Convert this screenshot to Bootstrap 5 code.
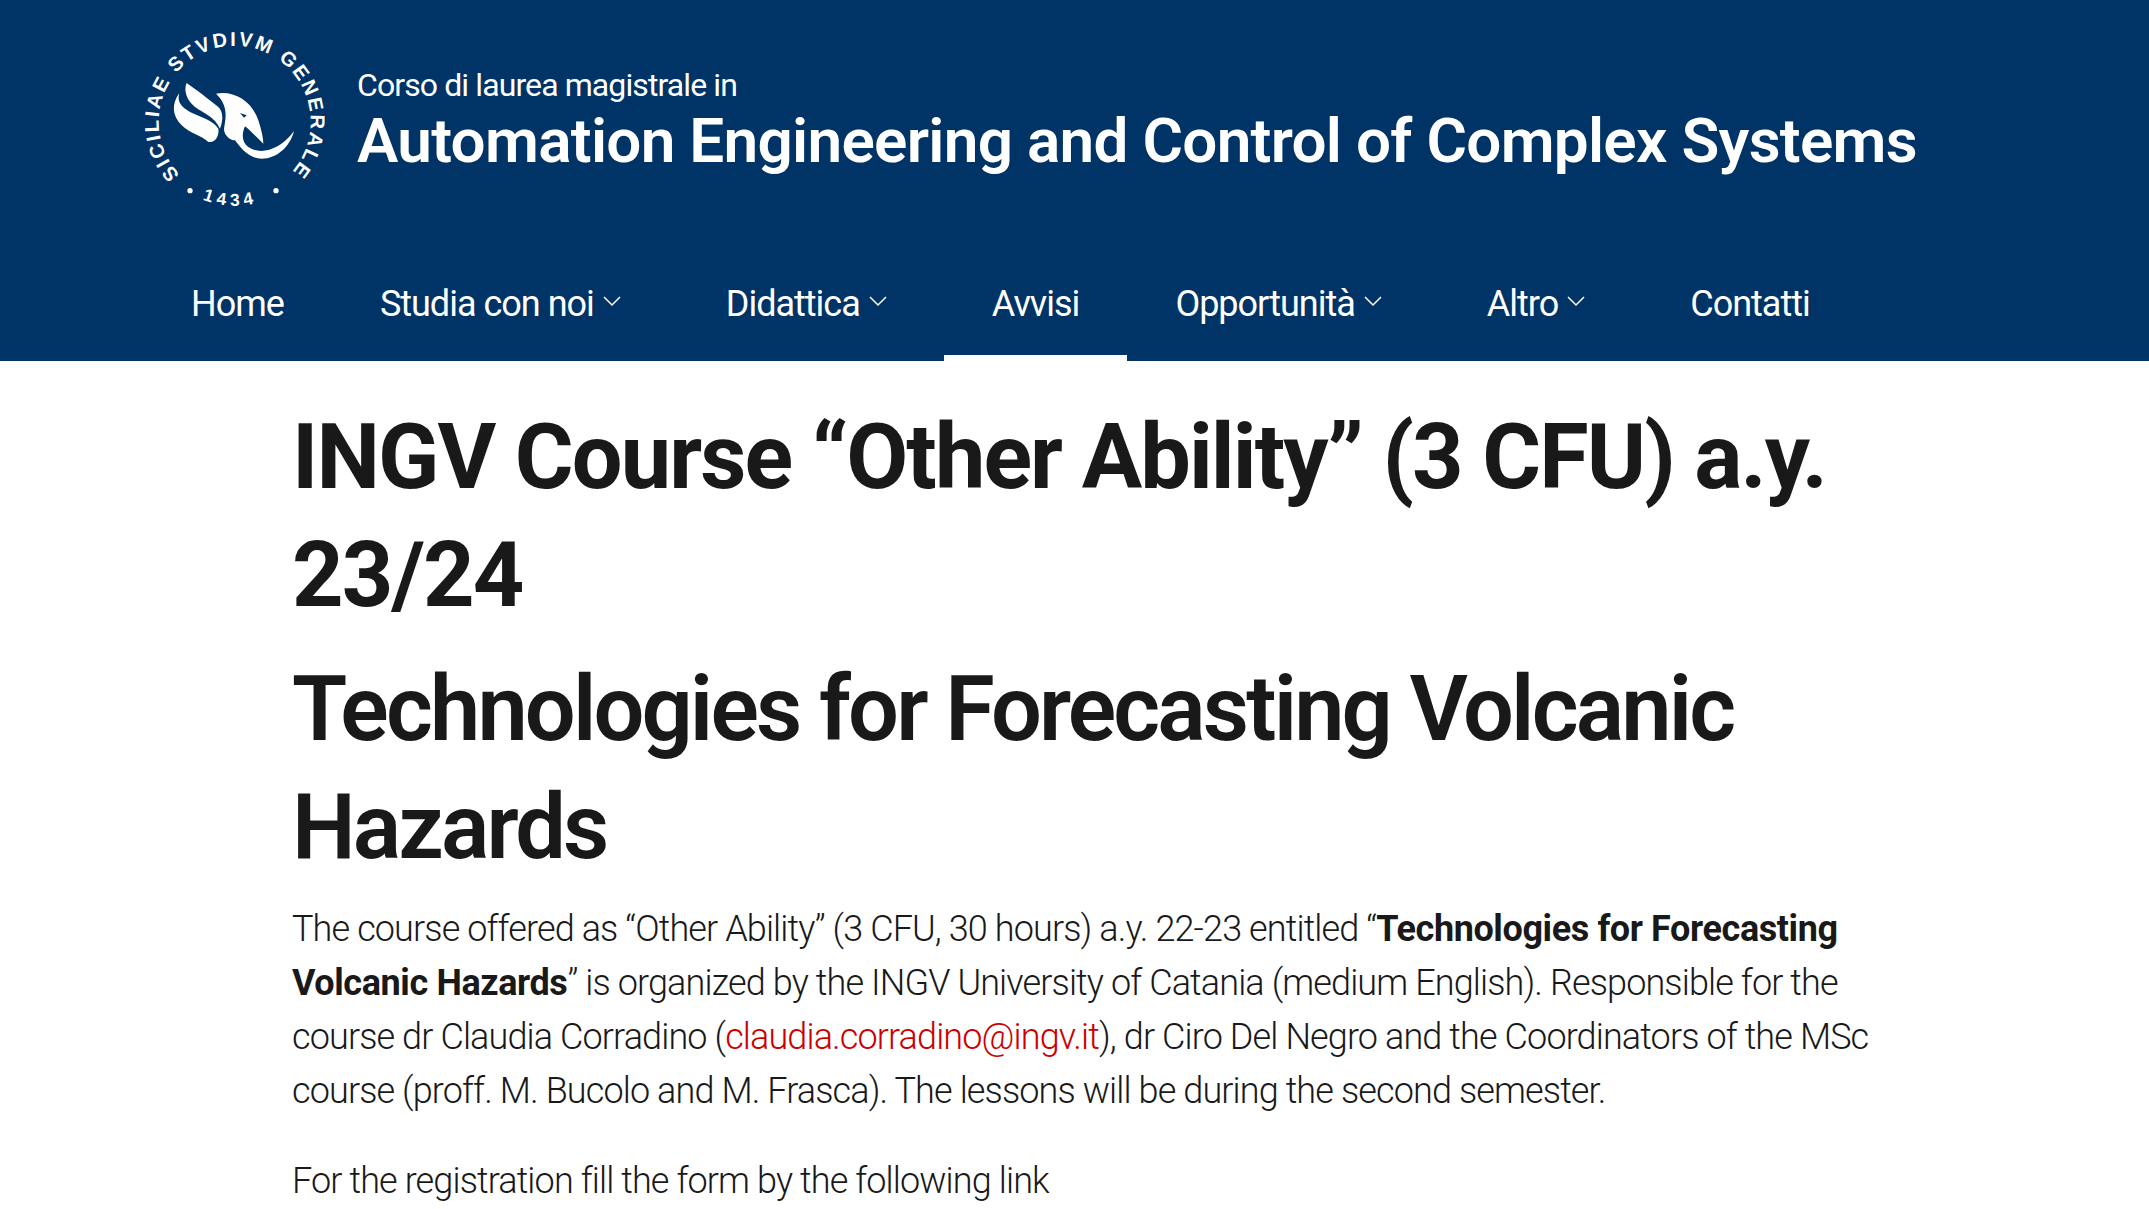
<!DOCTYPE html>
<html lang="en">

<head>
    <title>INGV Course</title>
    <link href="https://cdn.jsdelivr.net/npm/bootstrap@5.3.1/dist/css/bootstrap.min.css" rel="stylesheet">
    <style>
        body { font-family: Roboto, "Liberation Sans", sans-serif; color: #19191a; font-weight: 300; overflow: hidden; }
        .site-head { background: #003366; height: 361px; padding-left: 140px; color: #fff; }
        .brand-row { height: 248px; }
        .brand-logo { width: 187px; height: 187px; margin-top: 27px; margin-right: 30px; flex: none; overflow: visible; }
        .brand-sub { font-size: 32px; line-height: 40px; letter-spacing: -0.9px; font-weight: 400; }
        .brand-title { font-size: 62px; line-height: 72px; font-weight: 600; letter-spacing: -0.7px; }
        .brand-text { margin-top: 65px; }
        .main-nav { padding-left: 3px; height: 113px; }
        .main-nav .nav-link { color: #fff; font-size: 36px; line-height: 54px; font-weight: 400; letter-spacing: -1px; padding: 29px 48px 30px; height: 113px; }
        .main-nav .nav-link.active { border-bottom: 6px solid #fff; }
        .nav-chev { width: 18px; height: 12px; margin-left: 9px; margin-right: 9px; vertical-align: 9px; }
        .article { padding: 38px 0 0 292px; width: 1880px; }
        .article h1, .article h2 { font-size: 90px; line-height: 118px; margin: 0; }
        .article h1 { font-weight: 700; letter-spacing: -1.9px; }
        .article h2 { font-weight: 600; letter-spacing: -2.85px; margin-top: 16px; margin-bottom: 15px; }
        .article p { font-size: 36px; line-height: 54px; letter-spacing: -0.88px; margin-bottom: 36px; }
        .article strong { font-weight: 700; letter-spacing: -0.4px; }
        .article a { color: #cc0000; text-decoration: none; }
    </style>
</head>

<body>
    <header class="site-head">
        <div class="brand-row d-flex">
            <svg class="brand-logo" viewBox="60 80 561 561">
                <defs>
                    <path id="ringTop" d="M180 523 A228 228 0 1 1 508 523" />
                    <path id="ringLow" d="M230 590 A258 258 0 0 0 458 590" />
                </defs>
                <text fill="#fff" font-family="Liberation Sans" font-weight="700" font-size="60" letter-spacing="6.9">
                    <textPath href="#ringTop">SICILIAE STVDIVM GENERALE</textPath>
                </text>
                <text fill="#fff" font-family="Liberation Sans" font-weight="700" font-size="52" letter-spacing="14">
                    <textPath href="#ringLow" startOffset="8%">1434</textPath>
                </text>
                <circle cx="210" cy="571" r="8" fill="#fff" />
                <circle cx="468" cy="571" r="8" fill="#fff" />
                <path fill="#fff" d="M200 248C190 270 200 300 225 320C250 338 285 350 300 385C310 360 310 335 295 320C270 300 225 265 200 248Z" />
                <path fill="#fff" d="M178 278C155 310 155 345 185 375C210 400 245 405 265 425C290 428 298 400 295 385C280 360 240 350 210 335C185 320 170 305 178 278Z" />
                <path fill="#fff" d="M288 280C340 270 395 300 415 360C425 390 430 415 430 430C410 410 390 390 375 378C365 400 365 425 385 440C420 465 480 450 522 392C510 440 470 475 425 475C385 475 360 440 345 420C330 420 312 405 312 385C318 350 325 315 288 280Z" />
                <path fill="#003366" d="M360 338L380 345L372 352Z" />
            </svg>
            <div class="brand-text">
                <div class="brand-sub">Corso di laurea magistrale in</div>
                <div class="brand-title">Automation Engineering and Control of Complex Systems</div>
            </div>
        </div>
        <nav class="nav main-nav">
            <a class="nav-link" href="#">Home</a>
            <a class="nav-link" href="#">Studia con noi<svg class="nav-chev" viewBox="0 0 18 12"><path d="M1 2l8 8 8-8" fill="none" stroke="#fff" stroke-width="1.5" /></svg></a>
            <a class="nav-link" href="#">Didattica<svg class="nav-chev" viewBox="0 0 18 12"><path d="M1 2l8 8 8-8" fill="none" stroke="#fff" stroke-width="1.5" /></svg></a>
            <a class="nav-link active" href="#">Avvisi</a>
            <a class="nav-link" href="#">Opportunità<svg class="nav-chev" viewBox="0 0 18 12"><path d="M1 2l8 8 8-8" fill="none" stroke="#fff" stroke-width="1.5" /></svg></a>
            <a class="nav-link" href="#">Altro<svg class="nav-chev" viewBox="0 0 18 12"><path d="M1 2l8 8 8-8" fill="none" stroke="#fff" stroke-width="1.5" /></svg></a>
            <a class="nav-link" href="#">Contatti</a>
        </nav>
    </header>

    <main class="article">
        <h1>INGV Course “Other Ability” (3 CFU) a.y. 23/24</h1>
        <h2>Technologies for Forecasting Volcanic Hazards</h2>
        <p>The course offered as “Other Ability” (3 CFU, 30 hours) a.y. 22-23 entitled “<strong>Technologies for Forecasting Volcanic Hazards</strong>” is organized by the INGV University of Catania (medium English). Responsible for the course dr Claudia Corradino (<a href="#">claudia.corradino@ingv.it</a>), dr Ciro Del Negro and the Coordinators of the MSc course (proff. M. Bucolo and M. Frasca). The lessons will be during the second semester.</p>
        <p>For the registration fill the form by the following link</p>
    </main>
</body>

</html>
